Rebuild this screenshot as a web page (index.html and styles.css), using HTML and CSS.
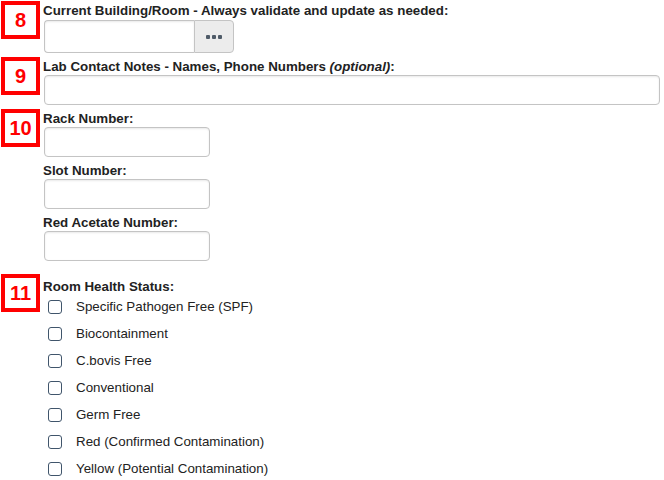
FILE: index.html
```html
<!DOCTYPE html>
<html lang="en">
<head>
    <meta charset="UTF-8">
    <meta name="viewport" content="width=device-width, initial-scale=1.0">
    <title>Room Details</title>
    <link rel="stylesheet" href="styles.css">
</head>
<body>
    <!-- STEP 8 -->
    <div class="step step-8">
        <div class="badge">8</div>
        <div class="step-body">
            <label class="field-label" for="room">Current Building/Room - Always validate and update as needed:</label>
            <div class="input-group">
                <input type="text" id="room" name="room">
                <button type="button" class="btn-lookup">
                    <svg width="16" height="4" viewBox="0 0 16 4"><rect x="0" y="0" width="4" height="4" rx="1"/><rect x="6" y="0" width="4" height="4" rx="1"/><rect x="12" y="0" width="4" height="4" rx="1"/></svg>
                </button>
            </div>
        </div>
    </div>

    <!-- STEP 9 -->
    <div class="step">
        <div class="badge">9</div>
        <div class="step-body">
            <label class="field-label" for="notes">Lab Contact Notes - Names, Phone Numbers <i>(optional)</i>:</label>
            <input type="text" id="notes" name="notes" class="input-wide">
        </div>
    </div>

    <!-- STEP 10 -->
    <div class="step">
        <div class="badge">10</div>
        <div class="step-body">
            <div class="field">
                <label class="field-label" for="rack">Rack Number:</label>
                <input type="text" id="rack" name="rack" class="input-short">
            </div>
            <div class="field">
                <label class="field-label" for="slot">Slot Number:</label>
                <input type="text" id="slot" name="slot" class="input-short">
            </div>
            <div class="field">
                <label class="field-label" for="acetate">Red Acetate Number:</label>
                <input type="text" id="acetate" name="acetate" class="input-short">
            </div>
        </div>
    </div>

    <!-- STEP 11 -->
    <div class="step step-11">
        <div class="badge">11</div>
        <div class="step-body">
            <div class="field-label">Room Health Status:</div>
            <label class="check-row"><input type="checkbox" name="health" value="spf"> Specific Pathogen Free (SPF)</label>
            <label class="check-row"><input type="checkbox" name="health" value="bio"> Biocontainment</label>
            <label class="check-row"><input type="checkbox" name="health" value="cbovis"> C.bovis Free</label>
            <label class="check-row"><input type="checkbox" name="health" value="conv"> Conventional</label>
            <label class="check-row"><input type="checkbox" name="health" value="germ"> Germ Free</label>
            <label class="check-row"><input type="checkbox" name="health" value="red"> Red (Confirmed Contamination)</label>
            <label class="check-row"><input type="checkbox" name="health" value="yellow"> Yellow (Potential Contamination)</label>
        </div>
    </div>
</body>
</html>
```

FILE: styles.css
```css
body {
    margin: 0;
    background-color: #fff;
    color: #222;
    font-family: "Liberation Sans", Arial, sans-serif;
    font-size: 10pt;
}

.step {
    display: flex;
    align-items: flex-start;
    gap: 3px;
    padding-left: 1px;
    margin-bottom: 4px;
}

.step-8 {
    padding-top: 1px;
}

.step-11 {
    margin-top: 13px;
}

.step-11 .field-label {
    padding-top: 7px;
}

.badge {
    box-sizing: border-box;
    flex: none;
    width: 39px;
    height: 38px;
    border: 4px solid #f00;
    color: #f00;
    font-size: 20px;
    font-weight: bold;
    line-height: 30px;
    text-align: center;
}

.step-body {
    flex: 1;
}

.field-label {
    display: block;
    padding-top: 4px;
    font-weight: bold;
    line-height: 12px;
}

.field-label i {
    font-weight: bold;
}

.field {
    margin-bottom: 4px;
}

.field:last-child {
    margin-bottom: 0;
}

input[type="text"] {
    display: block;
    box-sizing: border-box;
    height: 30px;
    margin: 2px 0 0 1px;
    padding: 4px 8px;
    border: 1px solid #c4c4c4;
    border-radius: 4px;
    box-shadow: inset 0 1px 2px rgba(0, 0, 0, 0.09);
    font-family: inherit;
    font-size: 10pt;
}

.input-short {
    width: 166px;
}

.input-wide {
    width: 616px;
}

.input-group {
    display: flex;
    width: 190px;
    margin: 3px 0 0 1px;
}

.input-group input[type="text"] {
    flex: 1;
    min-width: 0;
    height: 33px;
    margin: 0;
    border-right: none;
    border-radius: 4px 0 0 4px;
}

.btn-lookup {
    display: flex;
    align-items: center;
    justify-content: center;
    width: 40px;
    height: 33px;
    padding: 0;
    background-color: #ececec;
    border: 1px solid #c4c4c4;
    border-radius: 0 4px 4px 0;
    cursor: pointer;
}

.btn-lookup svg {
    fill: #4f5b68;
}

.check-row {
    display: flex;
    align-items: center;
    height: 27px;
}

.check-row input[type="checkbox"] {
    appearance: none;
    flex: none;
    box-sizing: border-box;
    width: 14px;
    height: 14px;
    margin: 0 14px 0 5px;
    background-color: #fff;
    border: 1px solid #40556b;
    border-radius: 3px;
}
```
